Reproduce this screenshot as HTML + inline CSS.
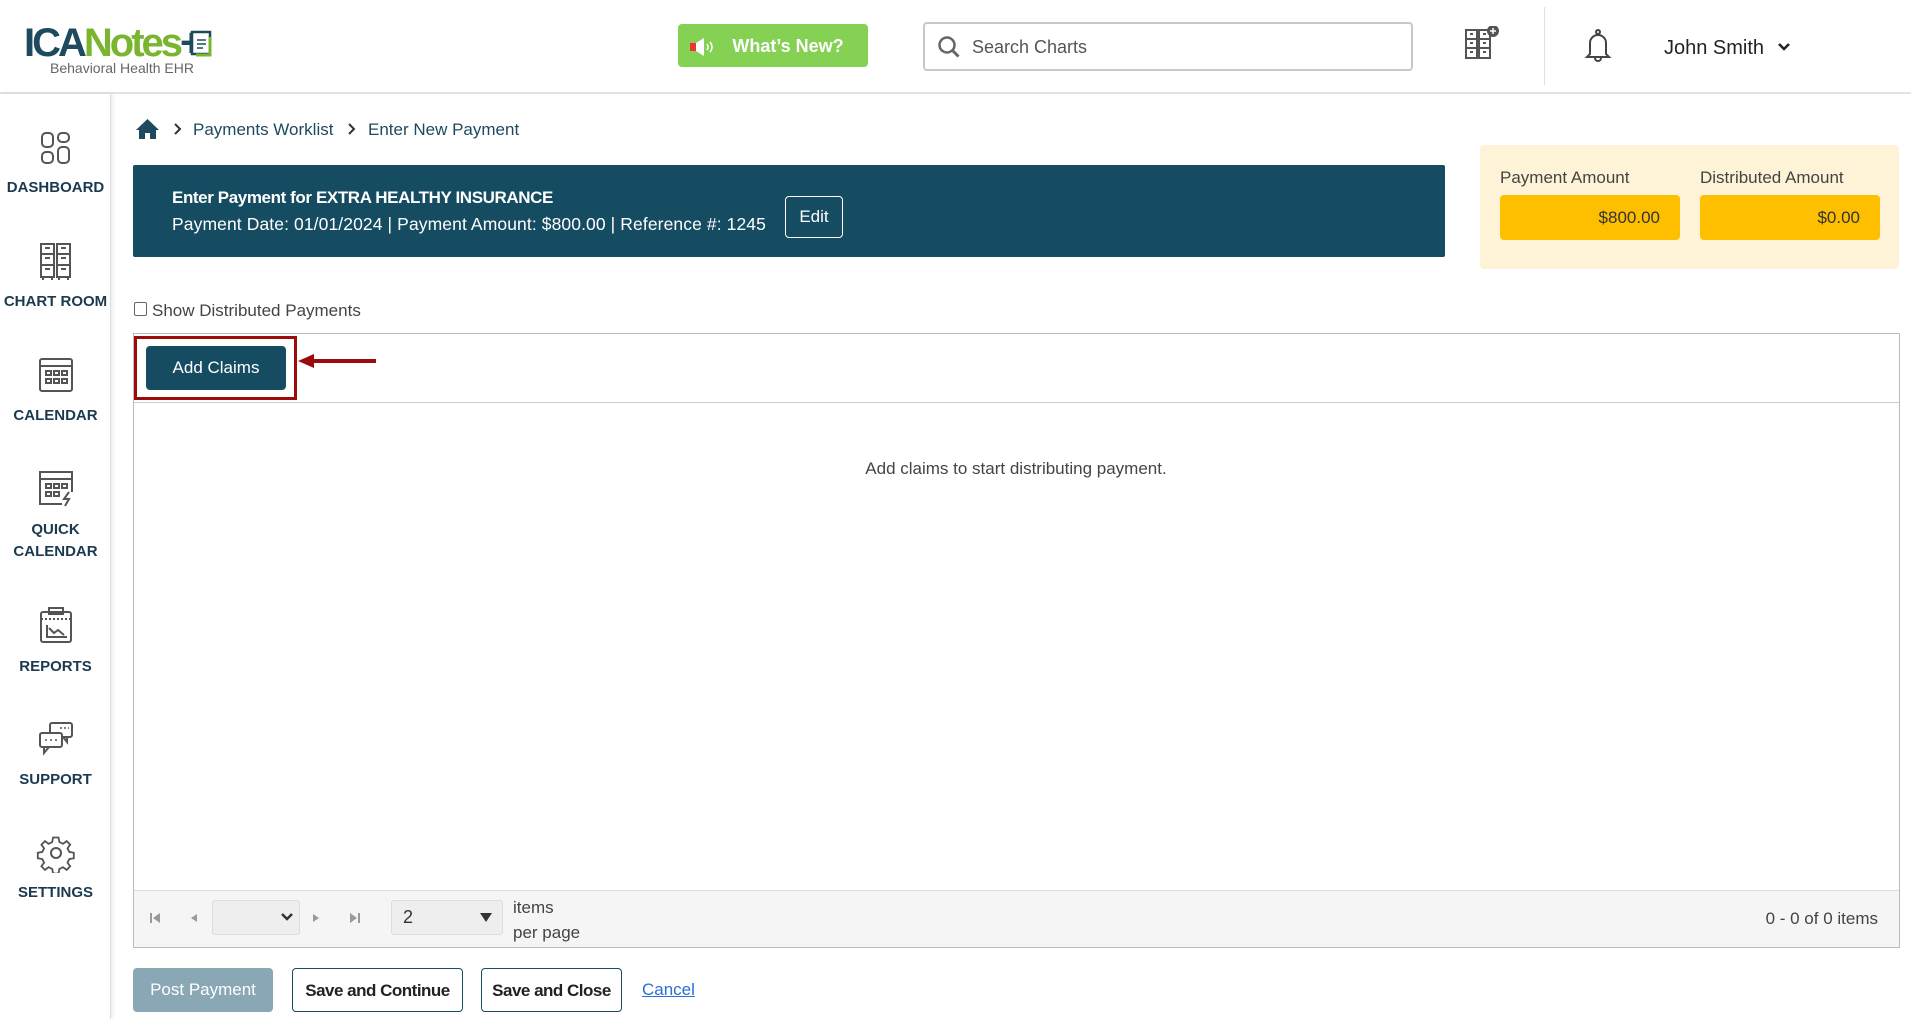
<!DOCTYPE html>
<html><head><meta charset="utf-8"><style>
*{box-sizing:border-box;margin:0;padding:0}
body{width:1911px;height:1019px;overflow:hidden;background:#fff;font-family:"Liberation Sans",sans-serif;color:#333;position:relative}
.a{position:absolute}
.hdr{left:0;top:0;width:1911px;height:94px;border-bottom:2px solid #e3e3e3}
.side{left:0;top:94px;width:111px;height:925px;border-right:1px solid #ddd;box-shadow:2px 0 4px rgba(0,0,0,.08)}
.lbl{width:111px;text-align:center;font-size:15px;font-weight:bold;color:#1b3a4f;line-height:22px}
.ic{left:36px;width:40px;height:40px}
.t{white-space:nowrap}
.btn{border-radius:4px;font-size:17px;text-align:center;white-space:nowrap}
</style></head><body>
<div class="a hdr"></div>
<div class="a t" style="left:24px;top:20px;font-size:40px;font-weight:bold;letter-spacing:-3px;line-height:46px"><span style="color:#1d4a5e">ICA</span><span style="color:#7ab530">Notes</span><span style="color:#1d4a5e">+</span></div>
<svg class="a" style="left:188px;top:29px" width="28" height="30"><rect x="4" y="3" width="18" height="22" fill="#fff" stroke="#1d4a5e" stroke-width="2.5"/><path d="M22 8v18H8" fill="none" stroke="#7ab530" stroke-width="3"/><path d="M9 11h9M9 15h9M9 19h6" stroke="#1d4a5e" stroke-width="1.5"/></svg>
<div class="a t" style="left:50px;top:60px;font-size:14px;color:#666">Behavioral Health EHR</div>
<div class="a btn" style="left:678px;top:24px;width:190px;height:43px;background:#85d154;color:#fff;font-weight:bold;font-size:18px;line-height:45px;padding-left:30px">What’s New?</div>
<svg class="a" style="left:690px;top:38px" width="26" height="18"><rect x="0" y="5" width="6" height="8" fill="#e33"/><path d="M6 5l8-5v18l-8-5z" fill="#fff"/><path d="M17 6q2 3 0 6M20 4q4 5 0 10" stroke="#fff" fill="none" stroke-width="1.5"/></svg>
<div class="a" style="left:923px;top:22px;width:490px;height:49px;border:2px solid #c8c8c8;border-radius:4px"></div>
<svg class="a" style="left:937px;top:35px" width="24" height="24"><circle cx="10" cy="10" r="7.5" stroke="#666" stroke-width="2.5" fill="none"/><path d="M15.5 15.5l6 6" stroke="#666" stroke-width="3"/></svg>
<div class="a t" style="left:972px;top:37px;font-size:18px;color:#555">Search Charts</div>
<svg class="a" style="left:1464px;top:26px" width="36" height="36" fill="none" stroke="#555" stroke-width="2"><rect x="2" y="4" width="11" height="28"/><rect x="15" y="4" width="11" height="28"/><path d="M2 13h11M2 22h11M15 13h11M15 22h11M6 8h3M6 17h3M6 26h3M19 8h3M19 17h3M19 26h3"/><circle cx="29" cy="5" r="5" fill="#555"/><path d="M29 2v6M26 5h6" stroke="#fff" stroke-width="1.5"/></svg>
<div class="a" style="left:1544px;top:7px;width:1px;height:78px;background:#e0e0e0"></div>
<svg class="a" style="left:1580px;top:28px" width="36" height="36" fill="none" stroke="#444" stroke-width="2"><path d="M10 26V15a8 8 0 0 1 16 0v11l3 3H7z"/><circle cx="18" cy="4" r="2"/><path d="M15 30a3 3 0 0 0 6 0"/></svg>
<div class="a t" style="left:1664px;top:37px;font-size:20px;color:#222">John Smith</div>
<svg class="a" style="left:1777px;top:42px" width="14" height="10"><path d="M2 2l5 5 5-5" stroke="#222" stroke-width="2.5" fill="none"/></svg>
<div class="a side"></div>
<svg class="a ic" style="top:130px" viewBox="0 0 40 40" fill="none" stroke="#555" stroke-width="2"><rect x="6" y="3" width="11" height="14" rx="4"/><rect x="22" y="3" width="11" height="9" rx="4"/><rect x="6" y="22" width="11" height="11" rx="4"/><rect x="22" y="17" width="11" height="16" rx="4"/></svg>
<div class="a lbl" style="top:177px">DASHBOARD</div>
<svg class="a ic" style="top:242px" viewBox="0 0 40 40" fill="none" stroke="#555" stroke-width="2"><rect x="5" y="2" width="13" height="33"/><rect x="21" y="2" width="13" height="33"/><path d="M5 12h13M5 23h13M21 12h13M21 23h13M9 6h5M9 16h5M9 27h5M25 6h5M25 16h5M25 27h5M7 35v3M16 35v3M23 35v3M32 35v3"/></svg>
<div class="a lbl" style="top:291px">CHART ROOM</div>
<svg class="a ic" style="top:355px" viewBox="0 0 40 40" fill="none" stroke="#555" stroke-width="2"><rect x="4" y="4" width="32" height="32" rx="2"/><path d="M4 11h32"/><rect x="10" y="16" width="5" height="4"/><rect x="18" y="16" width="5" height="4"/><rect x="26" y="16" width="5" height="4"/><rect x="10" y="24" width="5" height="4"/><rect x="18" y="24" width="5" height="4"/><rect x="26" y="24" width="5" height="4"/></svg>
<div class="a lbl" style="top:405px">CALENDAR</div>
<svg class="a ic" style="top:468px" viewBox="0 0 40 40" fill="none" stroke="#555" stroke-width="2"><path d="M26 36H4V4h32v20"/><path d="M4 11h32"/><rect x="10" y="16" width="5" height="4"/><rect x="18" y="16" width="5" height="4"/><rect x="26" y="16" width="5" height="4"/><rect x="10" y="24" width="5" height="4"/><rect x="18" y="24" width="5" height="4"/><path d="M33 24l-5 7h5l-4 7"/></svg>
<div class="a lbl" style="top:519px">QUICK<br>CALENDAR</div>
<svg class="a ic" style="top:606px" viewBox="0 0 40 40" fill="none" stroke="#555" stroke-width="2"><rect x="5" y="6" width="30" height="30" rx="2"/><rect x="13" y="2" width="14" height="6"/><path d="M5 13h30" stroke-dasharray="2 2"/><path d="M11 19v12h20M13 22l5 5 4-3 6 5"/></svg>
<div class="a lbl" style="top:656px">REPORTS</div>
<svg class="a ic" style="top:719px" viewBox="0 0 40 40" fill="none" stroke="#555" stroke-width="2"><rect x="14" y="4" width="22" height="14" rx="2"/><path d="M31 18v5l-4-5"/><rect x="4" y="14" width="22" height="14" rx="2" fill="#fff"/><path d="M8 28v6l5-6"/><path d="M9 21h2M14 21h2M19 21h2M24 9h2M28 9h2M32 9h1" stroke-width="1.5"/></svg>
<div class="a lbl" style="top:769px">SUPPORT</div>
<svg class="a ic" style="top:833px" viewBox="0 0 40 40" fill="none" stroke="#555" stroke-width="2"><path d="M17 3h6l1 5 4 2 4-3 4 4-3 4 2 4 5 1v6l-5 1-2 4 3 4-4 4-4-3-4 2-1 5h-6l-1-5-4-2-4 3-4-4 3-4-2-4-5-1v-6l5-1 2-4-3-4 4-4 4 3 4-2z" transform="scale(.9) translate(2 2)"/><circle cx="20" cy="20" r="5"/></svg>
<div class="a lbl" style="top:882px">SETTINGS</div>
<svg class="a" style="left:135px;top:118px" width="25" height="22"><path d="M12.5 1L1 12h3v9h6v-6h5v6h6v-9h3z" fill="#1d4a5e"/></svg>
<svg class="a" style="left:173px;top:122px" width="10" height="14"><path d="M2 2l5 5-5 5" stroke="#333" stroke-width="2" fill="none"/></svg>
<div class="a t" style="left:193px;top:120px;font-size:17px;color:#1d4a5e">Payments Worklist</div>
<svg class="a" style="left:347px;top:122px" width="10" height="14"><path d="M2 2l5 5-5 5" stroke="#333" stroke-width="2" fill="none"/></svg>
<div class="a t" style="left:368px;top:120px;font-size:17px;color:#1d4a5e">Enter New Payment</div>
<div class="a" style="left:133px;top:165px;width:1312px;height:92px;background:#154c62;border-radius:2px"></div>
<div class="a t" style="left:172px;top:188px;font-size:17px;font-weight:bold;color:#fff;letter-spacing:-.4px">Enter Payment for EXTRA HEALTHY INSURANCE</div>
<div class="a t" style="left:172px;top:214px;font-size:17.5px;color:#fff;letter-spacing:.1px">Payment Date: 01/01/2024 | Payment Amount: $800.00 | Reference #: 1245</div>
<div class="a btn" style="left:785px;top:196px;width:58px;height:42px;border:1px solid #fff;color:#fff;line-height:40px">Edit</div>
<div class="a" style="left:1480px;top:145px;width:419px;height:124px;background:#fef3d6;border-radius:4px"></div>
<div class="a t" style="left:1500px;top:168px;font-size:17px;color:#444">Payment Amount</div>
<div class="a t" style="left:1700px;top:168px;font-size:17px;color:#444">Distributed Amount</div>
<div class="a btn" style="left:1500px;top:195px;width:180px;height:45px;background:#fdbf00;line-height:45px;text-align:right;padding-right:20px;color:#333">$800.00</div>
<div class="a btn" style="left:1700px;top:195px;width:180px;height:45px;background:#fdbf00;line-height:45px;text-align:right;padding-right:20px;color:#333">$0.00</div>
<div class="a" style="left:134px;top:302px;width:13px;height:14px;border:1px solid #666;border-radius:2px"></div>
<div class="a t" style="left:152px;top:301px;font-size:17px;color:#444">Show Distributed Payments</div>
<div class="a" style="left:133px;top:333px;width:1767px;height:615px;border:1px solid #bbb"></div>
<div class="a" style="left:134px;top:402px;width:1765px;height:1px;background:#ccc"></div>
<div class="a" style="left:134px;top:336px;width:163px;height:64px;border:3px solid #9b0b0b"></div>
<div class="a btn" style="left:146px;top:346px;width:140px;height:44px;background:#154c62;color:#fff;line-height:44px">Add Claims</div>
<svg class="a" style="left:296px;top:352px" width="86" height="18"><path d="M2 9l16-7v5h62v4H18v5z" fill="#9b0b0b"/></svg>
<div class="a t" style="left:0;top:459px;width:2032px;text-align:center;font-size:17px;color:#444">Add claims to start distributing payment.</div>
<div class="a" style="left:134px;top:890px;width:1765px;height:57px;background:#f5f5f5;border-top:1px solid #ddd"></div>
<svg class="a" style="left:148px;top:910px" width="230" height="16" fill="#999"><rect x="2" y="3" width="2" height="10"/><path d="M12 3v10l-7-5z"/><path d="M49 4v8l-6-4z"/><path d="M165 4v8l6-4z"/><path d="M202 3v10l7-5z"/><rect x="210" y="3" width="2" height="10"/></svg>
<div class="a" style="left:212px;top:900px;width:88px;height:35px;background:#eee;border:1px solid #ddd;border-radius:3px"></div>
<svg class="a" style="left:280px;top:912px" width="14" height="10"><path d="M2 2l5 5 5-5" stroke="#333" stroke-width="2.5" fill="none"/></svg>
<div class="a" style="left:391px;top:900px;width:112px;height:35px;background:#eee;border:1px solid #ddd;border-radius:3px"></div>
<div class="a t" style="left:403px;top:907px;font-size:18px">2</div>
<svg class="a" style="left:480px;top:913px" width="12" height="10"><path d="M0 0h12l-6 9z" fill="#333"/></svg>
<div class="a t" style="left:513px;top:895px;font-size:17px;color:#444;line-height:25px">items<br>per page</div>
<div class="a t" style="left:1740px;top:909px;width:138px;text-align:right;font-size:17px;color:#444">0 - 0 of 0 items</div>
<div class="a btn" style="left:133px;top:968px;width:140px;height:44px;background:#89a7b4;color:#fff;line-height:44px">Post Payment</div>
<div class="a btn" style="left:292px;top:968px;width:171px;height:44px;border:1px solid #154c62;color:#222;line-height:44px;font-weight:bold;letter-spacing:-.5px">Save and Continue</div>
<div class="a btn" style="left:481px;top:968px;width:141px;height:44px;border:1px solid #154c62;color:#222;line-height:44px;font-weight:bold;letter-spacing:-.5px">Save and Close</div>
<div class="a t" style="left:642px;top:980px;font-size:17px;color:#2a6fd6;text-decoration:underline">Cancel</div>
</body></html>
